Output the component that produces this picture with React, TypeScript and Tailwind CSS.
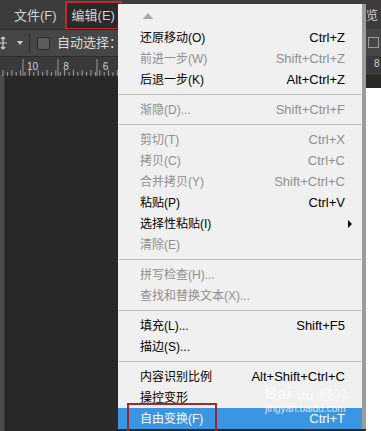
const font = "font-['Liberation_Sans','Noto_Sans_CJK_SC',sans-serif]";

type Item =
  | { sep: true }
  | { sep?: false; label: string; key?: string; disabled?: boolean; sub?: boolean; active?: boolean };

const items: Item[] = [
  { label: "还原移动(O)", key: "Ctrl+Z" },
  { label: "前进一步(W)", key: "Shift+Ctrl+Z", disabled: true },
  { label: "后退一步(K)", key: "Alt+Ctrl+Z" },
  { sep: true },
  { label: "渐隐(D)...", key: "Shift+Ctrl+F", disabled: true },
  { sep: true },
  { label: "剪切(T)", key: "Ctrl+X", disabled: true },
  { label: "拷贝(C)", key: "Ctrl+C", disabled: true },
  { label: "合并拷贝(Y)", key: "Shift+Ctrl+C", disabled: true },
  { label: "粘贴(P)", key: "Ctrl+V" },
  { label: "选择性粘贴(I)", sub: true },
  { label: "清除(E)", disabled: true },
  { sep: true },
  { label: "拼写检查(H)...", disabled: true },
  { label: "查找和替换文本(X)...", disabled: true },
  { sep: true },
  { label: "填充(L)...", key: "Shift+F5" },
  { label: "描边(S)..." },
  { sep: true },
  { label: "内容识别比例", key: "Alt+Shift+Ctrl+C" },
  { label: "操控变形" },
  { label: "自由变换(F)", key: "Ctrl+T", active: true },
];

function Ruler() {
  const ticks = [];
  for (let x = 3; x < 366; x += 4.4) ticks.push(x);
  return (
    <svg width="366" height="19" className="block">
      {ticks.map((x, i) => (
        <line key={i} x1={x} x2={x} y1={i % 2 ? 15 : 13} y2={19} stroke="#9a9a9a" strokeWidth="1" />
      ))}
      {[23, 58, 97].map((x) => (
        <line key={x} x1={x} x2={x} y1={2} y2={19} stroke="#9a9a9a" strokeWidth="1" />
      ))}
    </svg>
  );
}

export default function App() {
  return (
    <div className={`relative flex h-[431px] w-[381px] overflow-hidden bg-white ${font}`}>
      {/* Photoshop window */}
      <div className="flex w-[366px] flex-col bg-[#282828]">
        <div className="flex h-[29px] items-center bg-[#3c3c3c] pt-[2px] text-[13px] text-[#d2d2d2]">
          <span className="ml-[14px]">文件(F)</span>
          <div className="ml-[8px] flex h-[29px] w-[57px] items-center border-2 border-[#c02a2f] bg-[#2a2a2a] pl-[5px]">
            编辑(E)
          </div>
        </div>
        <div className="flex h-[27px] items-center border-t border-[#2e2e2e] bg-[#464646] text-[13px] text-[#dadada]">
          <svg width="10" height="14" viewBox="0 0 10 14" className="ml-[-2px]">
            <path d="M5 1v12M1 7h8M5 1l-2 2M5 1l2 2M5 13l-2-2M5 13l2-2" stroke="#cfcfcf" strokeWidth="1.2" fill="none" />
          </svg>
          <svg width="6" height="4" viewBox="0 0 6 4" className="ml-[9px]">
            <path d="M0 0h6L3 4z" fill="#cfcfcf" />
          </svg>
          <div className="ml-[6px] h-[20px] w-px bg-[#2e2e2e]" />
          <div className="ml-[7px] h-[13px] w-[13px] rounded-[2px] border border-[#2a2a2a] bg-[#5c5c5c]" />
          <span className="ml-[7px]">自动选择：</span>
        </div>
        <div className="relative h-[19px] border-t border-[#2c2c2c] bg-[#3a3a3a] text-[10px] text-[#cfcfcf]">
          <Ruler />
          <div className="absolute inset-0 flex items-start pt-[2px]">
            <span className="ml-[27px]">10</span>
            <span className="ml-[25px]">8</span>
            <span className="ml-[34px]">6</span>
          </div>
        </div>
        <div className="flex flex-1">
          <div className="w-[5px] border-r border-[#333] bg-[#4c4c4c]" />
          <div className="flex-1 bg-[#282828]" />
        </div>
      </div>

      {/* right edge of the window */}
      <div className="flex w-[15px] flex-col">
        <div className="flex h-[29px] items-center overflow-hidden bg-[#3c3c3c] pt-[2px] text-[12px] text-[#d2d2d2]">
          <span className="whitespace-nowrap">览</span>
        </div>
        <div className="flex h-[27px] items-center bg-[#464646] pl-[2px]">
          <div className="h-[11px] w-[11px] border border-[#9a9a9a]" />
        </div>
        <div className="h-[19px] bg-[#3a3a3a] pl-[8px] text-[10px] text-[#cfcfcf]">8</div>
        <div className="h-[13px] bg-[#282828]" />
        <div className="flex-1 bg-white" />
      </div>

      {/* Edit menu */}
      <div className="absolute left-[118px] top-[4px] flex w-[248px] flex-col border-r-4 border-[#9c9c9c] bg-[#f0f0f0] text-[12px]">
        <div className="flex h-[23px] items-center pl-[25px]">
          <svg width="10" height="6" viewBox="0 0 10 6">
            <path d="M0 6h10L5 0z" fill="#a8a8a8" />
          </svg>
        </div>
        {items.map((it, i) =>
          it.sep ? (
            <div key={i} className="flex h-[9px] items-center px-[1px]">
              <div className="h-px w-full bg-[#bcbcbc]" />
            </div>
          ) : (
            <div
              key={i}
              className={`flex h-[21px] shrink-0 items-center justify-between pl-[22px] ${
                it.sub ? "pr-[10px]" : "pr-[17px]"
              } ${it.active ? "bg-[#3a95e2] text-white" : it.disabled ? "text-[#8f8f8f]" : "text-black"}`}
            >
              <span>{it.label}</span>
              {it.key && <span className="text-[13px]">{it.key}</span>}
              {it.sub && (
                <svg width="4" height="8" viewBox="0 0 4 8">
                  <path d="M0 0l4 4-4 4z" fill="#000" />
                </svg>
              )}
            </div>
          )
        )}
      </div>

      {/* baidu watermark */}
      <div className="absolute left-[265px] top-[385px] flex flex-col items-start text-white/60">
        <div className="flex items-end gap-[6px] text-[17px] font-bold leading-none">
          <span>Bai</span>
          <span className="text-[13px]">du</span>
          <span className="text-[14px] font-normal">经验</span>
        </div>
        <span className="text-[10px] leading-[14px] text-white/80">jingyan.baidu.com</span>
      </div>

      {/* red highlight on 自由变换 */}
      <div className="absolute left-[127px] top-[403px] h-[30px] w-[90px] border-2 border-[#9e2a30]" />
    </div>
  );
}
